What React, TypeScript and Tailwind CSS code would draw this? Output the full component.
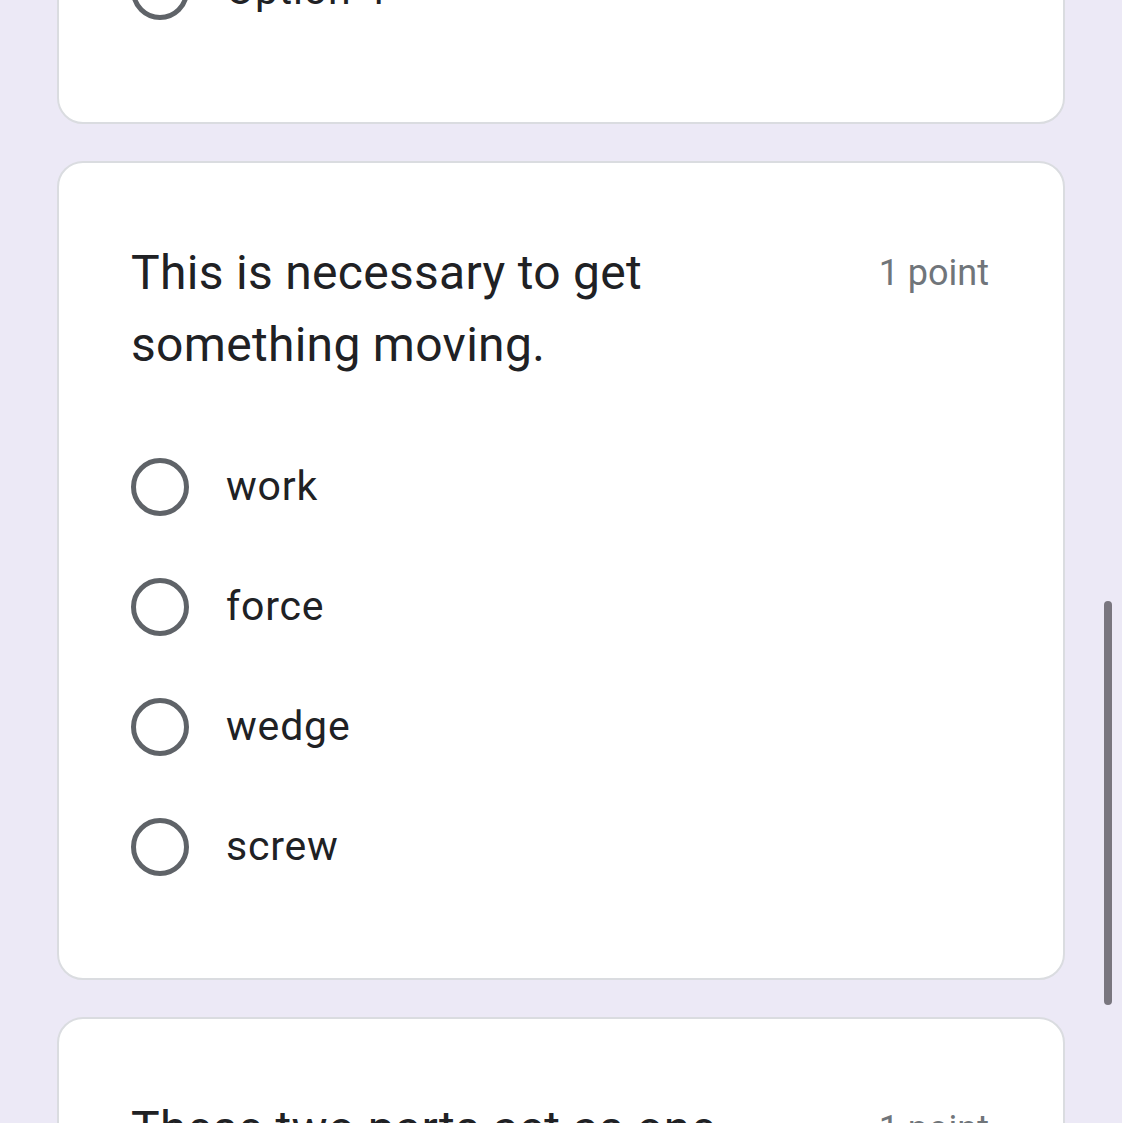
const questions = [
  {
    id: "q1",
    title: "Which of these is a simple machine?",
    options: ["Option 1", "Option 2", "Option 3", "Option 4"],
  },
  {
    id: "q2",
    title: "This is necessary to get something moving.",
    options: ["work", "force", "wedge", "screw"],
  },
  {
    id: "q3",
    title: "These two parts act as one simple machine.",
    options: ["pulley", "lever", "axle", "wheel"],
  },
];

const Radio = () => (
  <span className="block w-[58px] h-[58px] shrink-0 rounded-full border-[5px] border-[#5f6368]" />
);

const QuestionCard = ({ title, options }: { title: string; options: string[] }) => {
  return (
    <div className="bg-white border-2 border-[#dadce0] rounded-[26px] pt-[74px] pb-[71px] pl-[72px] pr-[74px]">
      <div className="flex items-start justify-between">
        <h2
          className="w-[722px] text-[48px] leading-[72px] tracking-[0.3px] text-[#202124]"
          style={{ fontFamily: "Roboto, sans-serif" }}
        >
          {title}
        </h2>
        <span
          className="text-[36px] leading-[72px] text-[#70757a]"
          style={{ fontFamily: "Roboto, sans-serif" }}
        >
          1 point
        </span>
      </div>
      <div className="mt-[46px] flex flex-col">
        {options.map((opt) => (
          <label key={opt} className="flex items-center h-[120px] gap-[37px]">
            <Radio />
            <span
              className="text-[41px] tracking-[0.8px] text-[#202124]"
              style={{ fontFamily: "Roboto, sans-serif" }}
            >
              {opt}
            </span>
          </label>
        ))}
      </div>
    </div>
  );
};

export default function App() {
  return (
    <div className="relative h-[1123px] w-[1122px] overflow-hidden bg-[#ece9f6]">
      <div className="mt-[-695px] flex flex-col gap-[37px] pl-[57px] pr-[57px]">
        {questions.map((q) => (
          <QuestionCard key={q.id} title={q.title} options={q.options} />
        ))}
      </div>
      <div className="absolute right-[10px] top-[601px] h-[404px] w-[8px] rounded-full bg-[#79767f]" />
    </div>
  );
}
